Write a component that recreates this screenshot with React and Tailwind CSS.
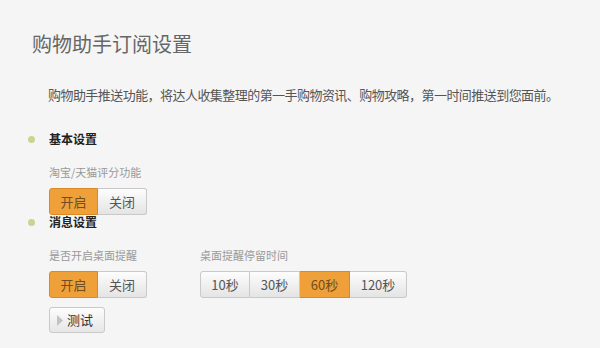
import React, { useState } from 'react';

const font = { fontFamily: '"Noto Sans CJK SC", "Noto Sans", sans-serif' };

function Toggle({ options, value, onChange, widths }) {
  return (
    <div className="flex h-[27px]">
      {options.map((opt, i) => {
        const active = opt === value;
        const first = i === 0;
        const last = i === options.length - 1;
        return (
          <button
            key={opt}
            type="button"
            onClick={() => onChange(opt)}
            className={`${widths[i]} h-full flex items-center justify-center text-[13px] border ${
              first ? 'rounded-l-[3px]' : 'border-l-0'
            } ${last ? 'rounded-r-[3px]' : ''} ${
              active
                ? 'bg-[#f0a038] border-[#d88a26] text-[#6e4e22]'
                : 'bg-gradient-to-b from-[#fdfdfd] to-[#e4e4e4] border-[#c9c9c9] text-[#555]'
            }`}
          >
            {opt}
          </button>
        );
      })}
    </div>
  );
}

function SectionTitle({ children }) {
  return (
    <div className="flex items-center h-[16px]">
      <span className="w-[7px] h-[7px] rounded-full bg-[#c6d690] ml-[28px] mr-[14px]" />
      <span className="text-[12px] font-bold text-[#222]">{children}</span>
    </div>
  );
}

export default function App() {
  const [rating, setRating] = useState('开启');
  const [desktop, setDesktop] = useState('开启');
  const [stay, setStay] = useState('60秒');

  return (
    <div className="w-[600px] h-[348px] bg-[#f5f5f5] overflow-hidden" style={font}>
      <h1 className="pt-[32px] pl-[32px] text-[20px] leading-[24px] text-[#666]">购物助手订阅设置</h1>
      <p className="mt-[31px] pl-[48px] text-[13px] leading-[16px] text-[#555] tracking-[-0.55px]">
        购物助手推送功能，将达人收集整理的第一手购物资讯、购物攻略，第一时间推送到您面前。
      </p>

      {/* 基本设置 */}
      <div className="mt-[28px]">
        <SectionTitle>基本设置</SectionTitle>
        <div className="pl-[49px]">
          <div className="mt-[17px] text-[11px] leading-[16px] text-[#999]">淘宝/天猫评分功能</div>
          <div className="mt-[8px] h-[26px] flex">
            <Toggle options={['开启', '关闭']} value={rating} onChange={setRating} widths={['w-[49px]', 'w-[49px]']} />
          </div>
        </div>
      </div>

      {/* 消息设置 */}
      <div>
        <SectionTitle>消息设置</SectionTitle>
        <div className="pl-[49px] flex">
          <div className="w-[151px]">
            <div className="mt-[17px] text-[11px] leading-[16px] text-[#999]">是否开启桌面提醒</div>
            <div className="mt-[8px]">
              <Toggle options={['开启', '关闭']} value={desktop} onChange={setDesktop} widths={['w-[49px]', 'w-[49px]']} />
            </div>
            <button
              type="button"
              className="mt-[9px] w-[56px] h-[26px] flex items-center pl-[7px] gap-[4px] rounded-[3px] border border-[#c9c9c9] bg-gradient-to-b from-[#fdfdfd] to-[#e6e6e6] text-[13px] text-[#333]"
            >
              <svg width="6" height="11" viewBox="0 0 6 11">
                <path d="M0 0 L6 5.5 L0 11 Z" fill="#c2c2c2" />
              </svg>
              <span>测试</span>
            </button>
          </div>
          <div>
            <div className="mt-[17px] text-[11px] leading-[16px] text-[#999]">桌面提醒停留时间</div>
            <div className="mt-[8px]">
              <Toggle
                options={['10秒', '30秒', '60秒', '120秒']}
                value={stay}
                onChange={setStay}
                widths={['w-[50px]', 'w-[50px]', 'w-[50px]', 'w-[57px]']}
              />
            </div>
          </div>
        </div>
      </div>
    </div>
  );
}
